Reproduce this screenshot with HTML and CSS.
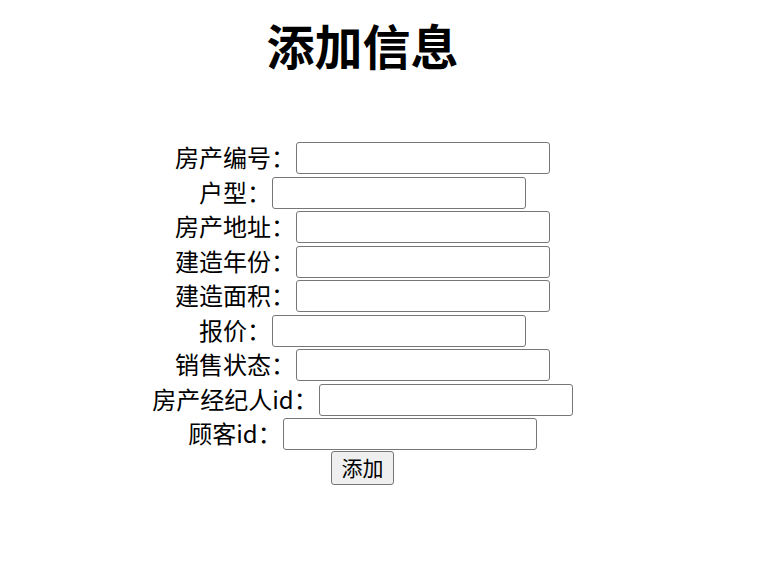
FILE: index.html
```html
<!DOCTYPE html>
<html lang="zh-CN">
<head>
    <meta charset="UTF-8">
    <meta name="viewport" content="width=device-width, initial-scale=1.0">
    <title>添加信息</title>
    <link rel="stylesheet" href="styles.css">
</head>
<body>
    <div class="page">
        <h1>添加信息</h1>
        <form class="add-form">
            <div class="form-row"><label>房产编号：</label><input type="text" name="houseId"></div>
            <div class="form-row"><label>户型：</label><input type="text" name="houseType"></div>
            <div class="form-row"><label>房产地址：</label><input type="text" name="address"></div>
            <div class="form-row"><label>建造年份：</label><input type="text" name="buildYear"></div>
            <div class="form-row"><label>建造面积：</label><input type="text" name="area"></div>
            <div class="form-row"><label>报价：</label><input type="text" name="price"></div>
            <div class="form-row"><label>销售状态：</label><input type="text" name="status"></div>
            <div class="form-row"><label>房产经纪人id：</label><input type="text" name="agentId"></div>
            <div class="form-row"><label>顾客id：</label><input type="text" name="customerId"></div>
            <div class="form-actions"><button type="button">添加</button></div>
        </form>
    </div>
</body>
</html>
```

FILE: styles.css
```css
body {
    margin: 8px;
    font-family: "Noto Sans CJK SC", "Noto Sans", sans-serif;
    color: #000;
    background: #fff;
}
.page {
    width: 709px;
    text-align: center;
}
h1 {
    font-size: 48px;
    line-height: 48px;
    font-weight: bold;
    margin: 12px 0 0;
}
.add-form {
    margin-top: 73px;
}
.form-row {
    display: flex;
    justify-content: center;
    align-items: center;
    gap: 1px;
    height: 34.5px;
}
.form-row label {
    font-size: 24px;
    line-height: 1;
    margin-top: -2px;
}
.form-row input {
    box-sizing: border-box;
    width: 254px;
    height: 32px;
    margin: 0;
    border: 1px solid #767676;
    border-radius: 3px;
    background: #fff;
}
.form-actions {
    display: flex;
    justify-content: center;
    margin-top: -1px;
}
.form-actions button {
    box-sizing: border-box;
    width: 63px;
    height: 34px;
    padding: 0;
    font-family: "Noto Sans CJK SC", sans-serif;
    font-size: 21px;
    line-height: 1;
    color: #000;
    background: #efefef;
    border: 1px solid #767676;
    border-radius: 3px;
}
```
